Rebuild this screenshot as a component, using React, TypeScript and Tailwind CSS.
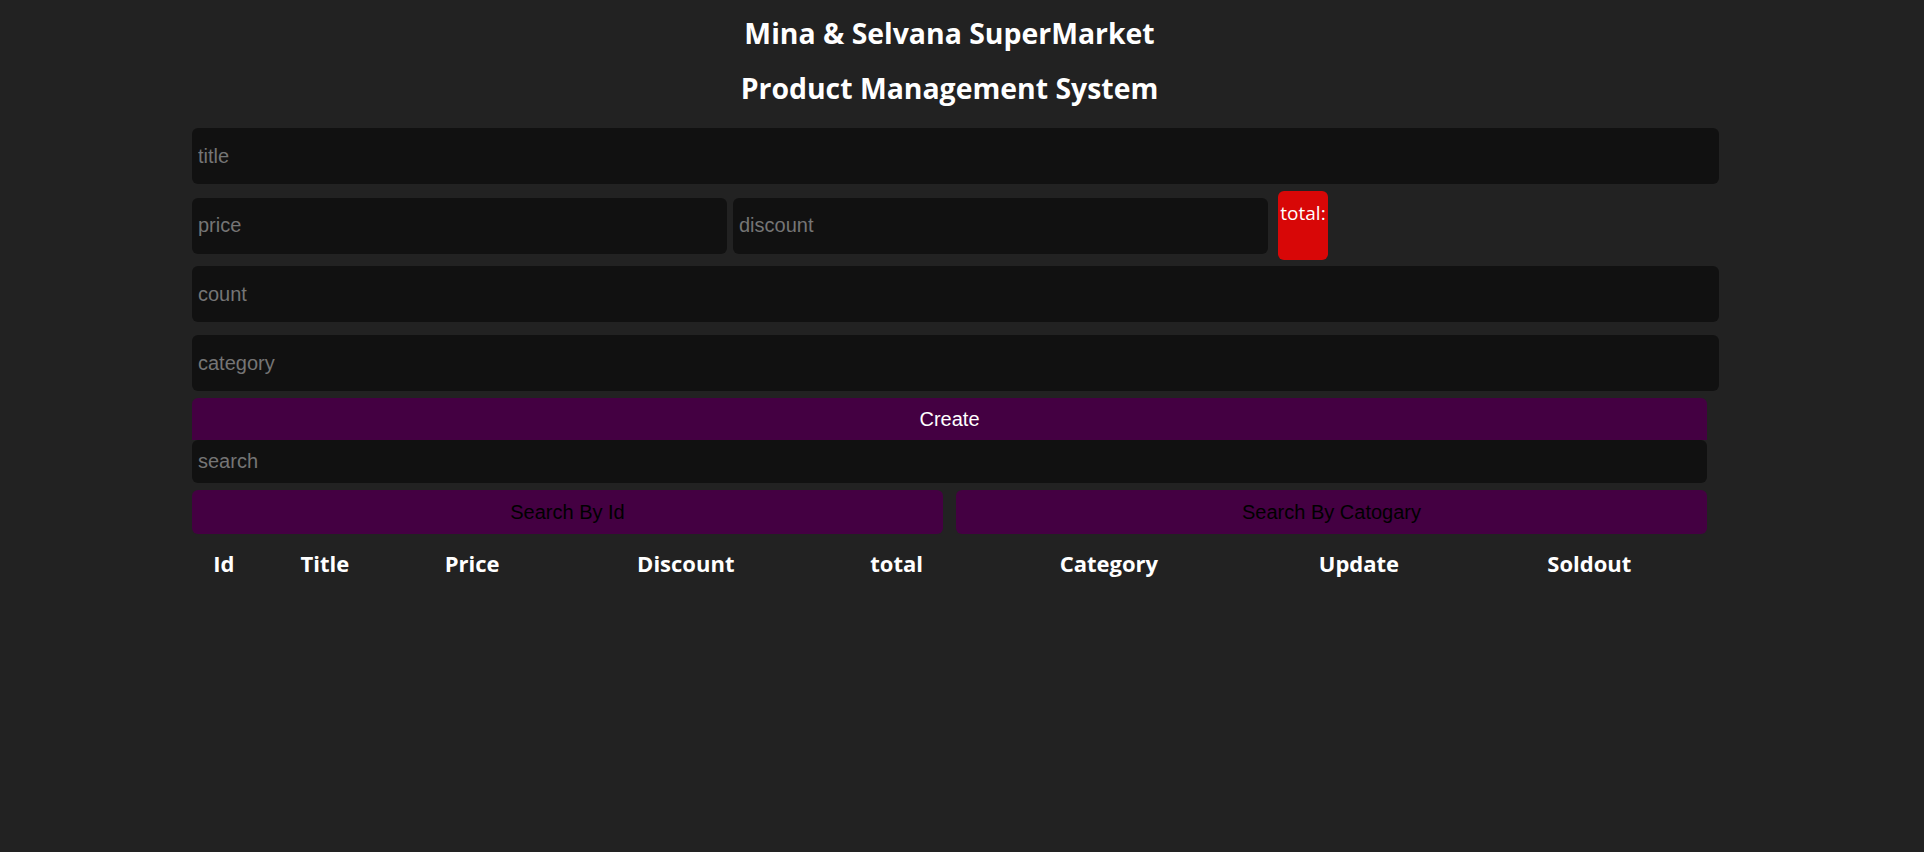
import React from 'react';

const fieldCls =
  "block rounded-[6px] bg-[#111111] px-[6px] text-[20px] text-white outline-none placeholder:text-[#757575] font-['Liberation_Sans',Arial,sans-serif]";

const headers = ['Id', 'Title', 'Price', 'Discount', 'total', 'Category', 'Update', 'Soldout'];

export default function App() {
  return (
    <div className="min-h-[1092px] bg-[#222222] pr-[25px] text-white font-['Open_Sans',sans-serif]">
      <div className="mx-auto w-[1515px] pt-[16px]">
        <h2 className="text-center text-[28.4px] font-bold leading-[34px]">Mina &amp; Selvana SuperMarket</h2>
        <h2 className="mt-[21px] text-center text-[28.4px] font-bold leading-[34px]">Product Management System</h2>

        <div className="mt-[23px] flex flex-col">
          <input placeholder="title" className={`${fieldCls} h-[56px] w-[1527px]`} />

          <div className="mt-[7px] flex items-center">
            <input placeholder="price" className={`${fieldCls} h-[56px] w-[535px]`} />
            <input placeholder="discount" className={`${fieldCls} ml-[6px] h-[56px] w-[535px]`} />
            <span className="ml-[10px] box-border h-[69px] w-[50px] rounded-[6px] bg-[#d80707] pt-[9px] text-center text-[19px] leading-[26px]">
              total:
            </span>
          </div>

          <input placeholder="count" className={`${fieldCls} mt-[6px] h-[56px] w-[1527px]`} />
          <input placeholder="category" className={`${fieldCls} mt-[13px] h-[56px] w-[1527px]`} />

          <button className="mt-[7px] h-[42px] w-full rounded-t-[6px] bg-[#440042] text-[20px] text-white font-['Liberation_Sans',Arial,sans-serif]">
            Create
          </button>
          <input placeholder="search" className={`${fieldCls} box-border h-[43px] w-full`} />

          <div className="mt-[7px] flex gap-[13px]">
            <button className="h-[44px] flex-1 rounded-[6px] bg-[#440042] text-[20px] text-black font-['Liberation_Sans',Arial,sans-serif]">
              Search By Id
            </button>
            <button className="h-[44px] flex-1 rounded-[6px] bg-[#440042] text-[20px] text-black font-['Liberation_Sans',Arial,sans-serif]">
              Search By Catogary
            </button>
          </div>
        </div>

        <table className="mt-[14px] w-full text-[22px] font-bold">
          <thead>
            <tr>
              {headers.map((h) => (
                <th key={h} className="px-[1px] py-[1px] text-center leading-[28px]">
                  {h}
                </th>
              ))}
            </tr>
          </thead>
        </table>
      </div>
    </div>
  );
}
